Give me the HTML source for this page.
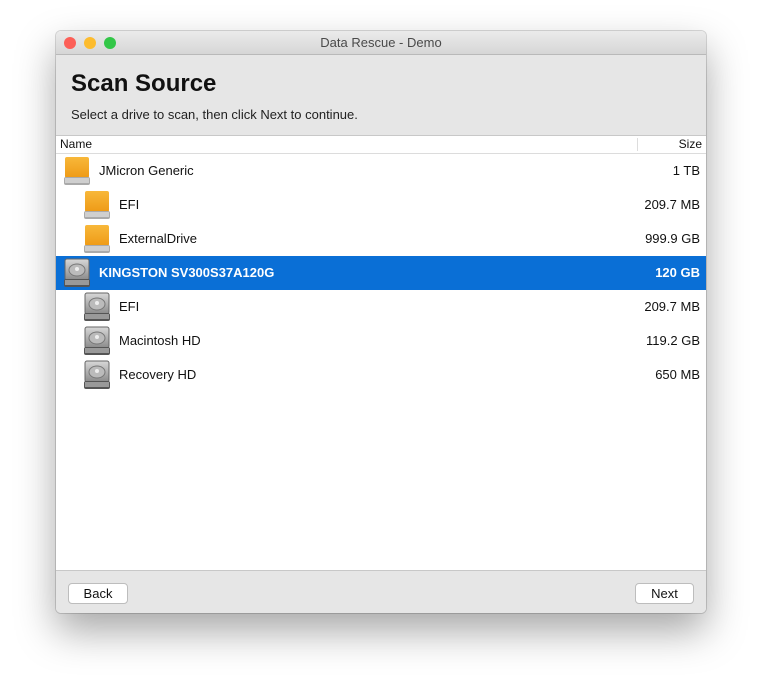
<!DOCTYPE html>
<html><head><style>
body{margin:0;width:762px;height:694px;background:#fff;font-family:"Liberation Sans",sans-serif;position:relative;overflow:hidden}
.win{position:absolute;left:56px;top:31px;width:650px;height:582px;background:#fff;border-radius:5px;overflow:hidden;box-shadow:0 18px 40px rgba(0,0,0,.35),0 0 0 1px rgba(0,0,0,.15)}
.title{height:23px;background:linear-gradient(#ebebeb,#d6d6d6);border-bottom:1px solid #b9b9b9;text-align:center;font-size:13px;line-height:23px;color:#4a4a4a;position:relative}
.dot{position:absolute;top:6px;width:12px;height:12px;border-radius:50%}
.head{height:80px;background:#e6e6e6;position:relative}
.head h1{position:absolute;left:15px;top:15px;margin:0;font-size:24px;font-weight:bold;color:#111}
.head p{position:absolute;left:15px;top:52px;margin:0;font-size:13px;color:#222}
.cols{height:17px;border-top:1px solid #c8c8c8;border-bottom:1px solid #dcdcdc;font-size:12px;line-height:17px;position:relative;color:#111}
.row{position:absolute;left:0;width:650px;height:34px;font-size:13px;line-height:34px;color:#111}
.row .n{position:absolute}
.row .s{position:absolute;right:6px}
.sel{background:#0a6fd6;color:#fff;font-weight:bold}
.ic{position:absolute;top:2px;width:28px;height:30px}
.foot{position:absolute;left:0;top:539px;width:650px;height:43px;background:#e6e6e6;border-top:1px solid #c8c8c8}
.btn{position:absolute;top:12px;height:19px;background:#fff;border:1px solid #bdbdbd;border-radius:4px;font-size:13px;line-height:19px;text-align:center;color:#111}
</style></head><body>
<svg width="0" height="0" style="position:absolute"><defs>
<linearGradient id="o" x1="0" y1="0" x2="0" y2="1"><stop offset="0" stop-color="#f8b83a"/><stop offset="1" stop-color="#ee9a16"/></linearGradient>
<linearGradient id="g" x1="0" y1="0" x2="0" y2="1"><stop offset="0" stop-color="#d8d8d8"/><stop offset="1" stop-color="#8a8a8a"/></linearGradient>
<symbol id="od" viewBox="0 0 28 30"><rect x="2" y="1" width="24" height="21" rx="2" fill="url(#o)"/><rect x="1" y="21" width="26" height="8" rx="2" fill="#aaa"/><rect x="2" y="22" width="24" height="5" fill="#cfcfcf"/></symbol>
<symbol id="gd" viewBox="0 0 28 30"><rect x="2" y="1" width="24" height="21" rx="2" fill="url(#g)" stroke="#666"/><ellipse cx="14" cy="12" rx="8" ry="6" fill="#bbb" stroke="#777"/><circle cx="14" cy="11" r="2" fill="#eee"/><rect x="1" y="21" width="26" height="8" rx="2" fill="#555"/><rect x="2" y="22" width="24" height="5" fill="#999"/></symbol>
</defs></svg>
<div class="win">
<div class="title"><span class="dot" style="left:8px;background:#fc5f57"></span><span class="dot" style="left:28px;background:#fdbc2e"></span><span class="dot" style="left:48px;background:#33c748"></span>Data Rescue - Demo</div>
<div class="head"><h1>Scan Source</h1><p>Select a drive to scan, then click Next to continue.</p></div>
<div class="cols"><span style="position:absolute;left:4px">Name</span><span style="position:absolute;left:581px;top:2px;height:13px;border-left:1px solid #ddd"></span><span style="position:absolute;right:4px">Size</span></div>
<div style="position:relative">
<div class="row" style="top:0"><svg class="ic" style="left:7px"><use href="#od"/></svg><span class="n" style="left:43px">JMicron Generic</span><span class="s">1 TB</span></div>
<div class="row" style="top:34px"><svg class="ic" style="left:27px"><use href="#od"/></svg><span class="n" style="left:63px">EFI</span><span class="s">209.7 MB</span></div>
<div class="row" style="top:68px"><svg class="ic" style="left:27px"><use href="#od"/></svg><span class="n" style="left:63px">ExternalDrive</span><span class="s">999.9 GB</span></div>
<div class="row sel" style="top:102px"><svg class="ic" style="left:7px"><use href="#gd"/></svg><span class="n" style="left:43px">KINGSTON SV300S37A120G</span><span class="s">120 GB</span></div>
<div class="row" style="top:136px"><svg class="ic" style="left:27px"><use href="#gd"/></svg><span class="n" style="left:63px">EFI</span><span class="s">209.7 MB</span></div>
<div class="row" style="top:170px"><svg class="ic" style="left:27px"><use href="#gd"/></svg><span class="n" style="left:63px">Macintosh HD</span><span class="s">119.2 GB</span></div>
<div class="row" style="top:204px"><svg class="ic" style="left:27px"><use href="#gd"/></svg><span class="n" style="left:63px">Recovery HD</span><span class="s">650 MB</span></div>
</div>
<div class="foot"><div class="btn" style="left:12px;width:58px">Back</div><div class="btn" style="left:579px;width:57px">Next</div></div>
</div>
</body></html>
